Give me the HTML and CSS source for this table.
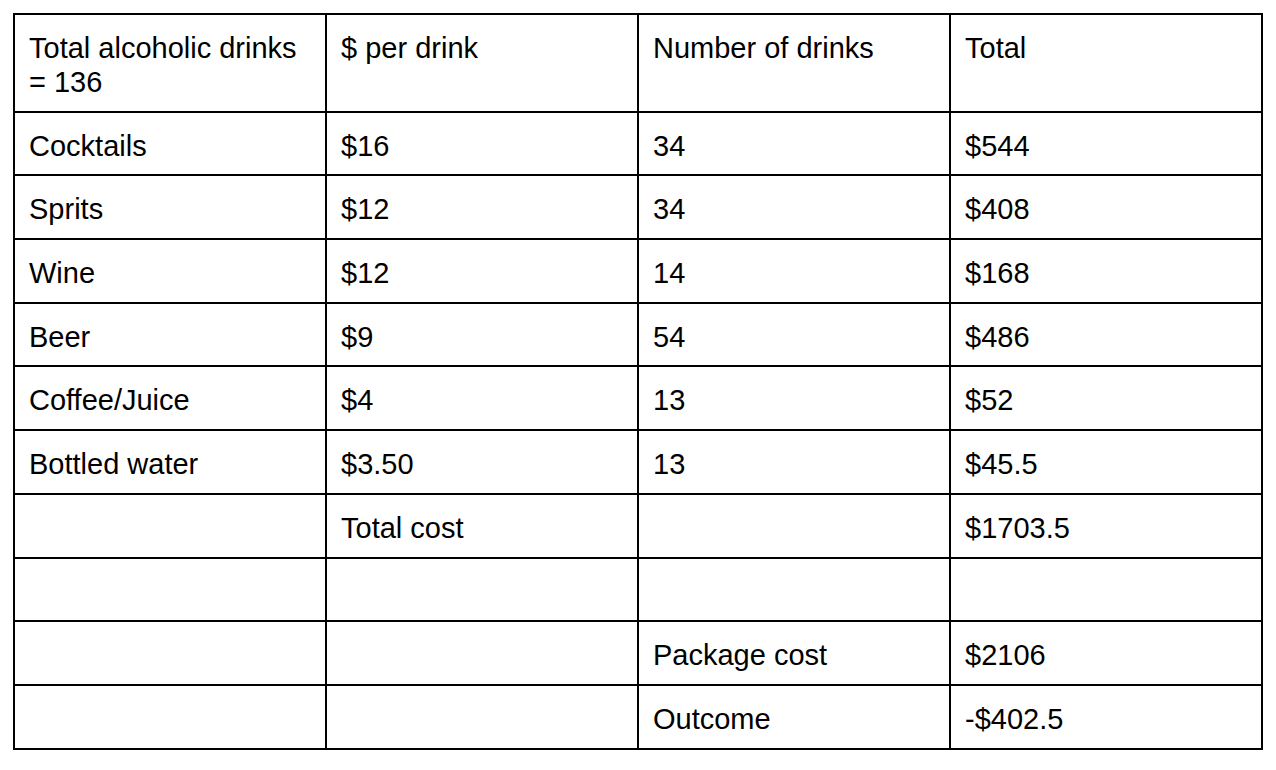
FILE: index.html
```html
<!DOCTYPE html>
<html>
<head>
<meta charset="utf-8">
<link rel="stylesheet" href="styles.css">
</head>
<body>
<table class="sheet">
  <colgroup><col class="c"><col class="c"><col class="c"><col class="c"></colgroup>
  <tr class="head"><td>Total alcoholic drinks = 136</td><td>$ per drink</td><td>Number of drinks</td><td>Total</td></tr>
  <tr><td>Cocktails</td><td>$16</td><td>34</td><td>$544</td></tr>
  <tr><td>Sprits</td><td>$12</td><td>34</td><td>$408</td></tr>
  <tr><td>Wine</td><td>$12</td><td>14</td><td>$168</td></tr>
  <tr><td>Beer</td><td>$9</td><td>54</td><td>$486</td></tr>
  <tr><td>Coffee/Juice</td><td>$4</td><td>13</td><td>$52</td></tr>
  <tr><td>Bottled water</td><td>$3.50</td><td>13</td><td>$45.5</td></tr>
  <tr><td></td><td>Total cost</td><td></td><td>$1703.5</td></tr>
  <tr><td></td><td></td><td></td><td></td></tr>
  <tr><td></td><td></td><td>Package cost</td><td>$2106</td></tr>
  <tr><td></td><td></td><td>Outcome</td><td>-$402.5</td></tr>
</table>
</body>
</html>
```
FILE: styles.css
```css
html, body {
  margin: 0;
  padding: 0;
  background: #fff;
}
body {
  padding: 13px;
}
.sheet {
  border-collapse: separate;
  border-spacing: 0;
  table-layout: fixed;
  width: 1250px;
  border-left: 2px solid #000;
  border-top: 2px solid #000;
  font-family: "Liberation Sans", Arial, sans-serif;
  font-size: 29px;
  line-height: 34px;
  color: #000;
}
.c {
  width: 312px;
}
.sheet td {
  border-right: 2px solid #000;
  border-bottom: 2px solid #000;
  padding: 16px 14px 11.7px 14px;
  height: 34px;
  vertical-align: top;
  box-sizing: content-box;
}
.sheet .head td {
  height: 68px;
  padding-top: 16px;
  padding-bottom: 11.7px;
}
```
